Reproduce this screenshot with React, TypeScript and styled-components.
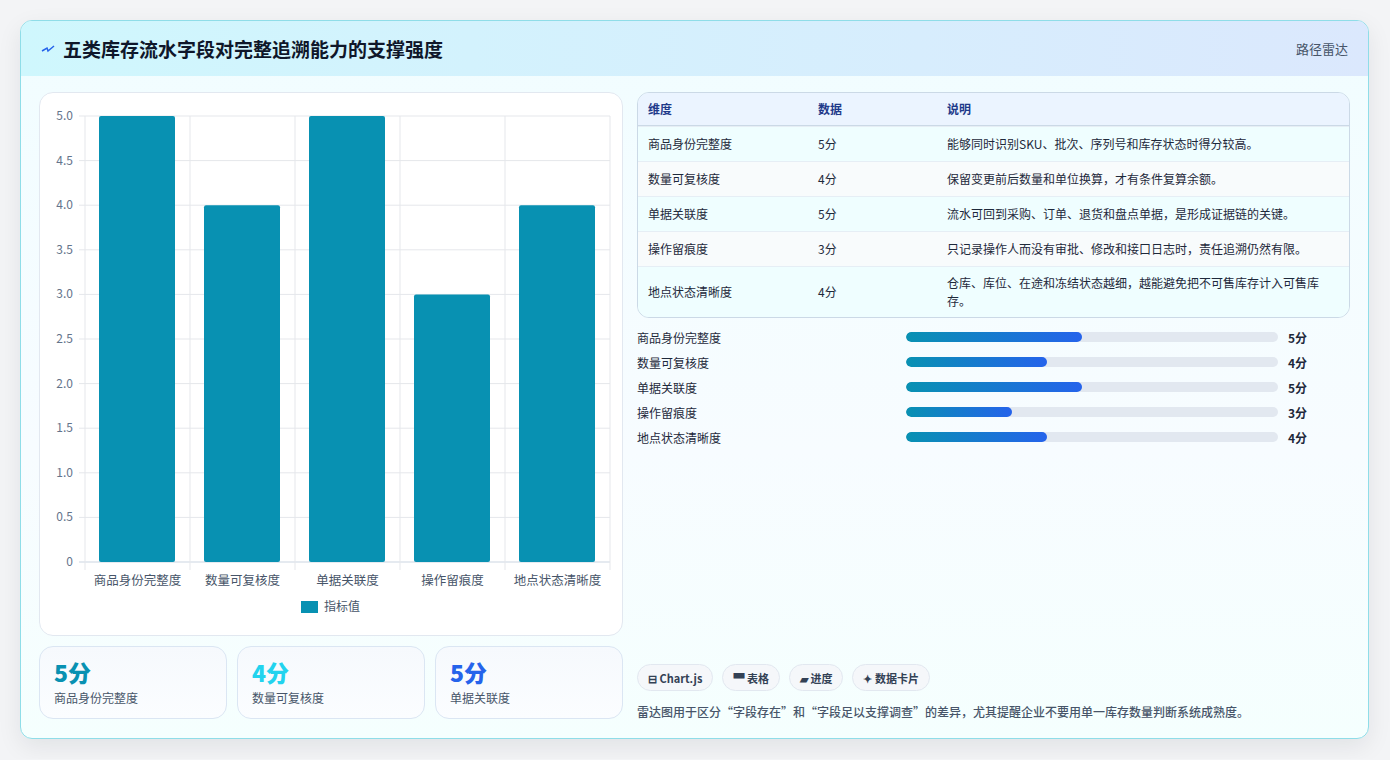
import React from "react";
import styled, { createGlobalStyle } from "styled-components";

const G = createGlobalStyle`
  html,body{margin:0;padding:0;background:#f3f4f6;}
  body{font-family:"Noto Sans CJK SC","Noto Sans",sans-serif;color:#0f172a;}
`;
const Page = styled.div`padding:20px 21px 20px 20px;`;
const Card = styled.div`
  border:1px solid #8fdde8;border-radius:12px;overflow:hidden;height:717px;
  display:flex;flex-direction:column;
  background:linear-gradient(180deg,#f1fdff,#f7fcff 60%,#f5fffe);
  box-shadow:0 8px 24px rgba(15,23,42,0.08);
`;
const Header = styled.div`
  height:55px;display:flex;align-items:center;justify-content:space-between;
  padding:0 20px;background:linear-gradient(90deg,#cff7fd,#dbe8fd);
`;
const Title = styled.h1`margin:0;font-size:19px;font-weight:700;display:flex;align-items:center;gap:8px;color:#0f172a;`;
const Tag = styled.span`font-size:13px;color:#475569;`;
const Body = styled.div`flex:1;display:grid;grid-template-columns:584px 1fr;gap:14px;padding:16px 18px 18px 18px;`;
const Col = styled.div`display:flex;flex-direction:column;gap:10px;min-height:0;`;
const ChartBox = styled.div`height:544px;box-sizing:border-box;background:#fff;border:1px solid #e2e8f0;border-radius:14px;`;
const Stats = styled.div`display:grid;grid-template-columns:repeat(3,1fr);gap:10px;`;
const Stat = styled.div`height:73px;box-sizing:border-box;border:1px solid #dbe6f3;border-radius:14px;background:linear-gradient(180deg,#f6f9fd,#fbfdff);padding:10px 14px;`;
const Big = styled.div<{c:string}>`font-size:23px;font-weight:800;color:${p=>p.c};line-height:30px;`;
const Small = styled.div`font-size:12px;color:#475569;margin-top:2px;`;
const Table = styled.div`border:1px solid #cbd9e6;border-radius:12px;overflow:hidden;background:#f0fdff;`;
const Row = styled.div<{h?:boolean;alt?:boolean}>`
  display:grid;grid-template-columns:170px 129px 1fr;padding:0 30px 0 10px;align-items:center;
  min-height:${p=>p.h?32:34}px;font-size:12px;
  ${p=>p.h?"background:#ebf4ff;color:#1e3a8a;font-weight:600;border-bottom:1px solid #cbd9e6;":""}
  ${p=>!p.h?"border-top:1px solid #e6eef5;":""}
  background:${p=>p.h?"#ebf4ff":p.alt?"#f8fbfc":"#effeff"};
  color:${p=>p.h?"#1e3a8a":"#1e293b"};
`;
const Cell = styled.div`padding:7px 0;line-height:18px;`;
const Bars = styled.div`display:flex;flex-direction:column;gap:7px;margin-top:10px;`;
const BarRow = styled.div`display:grid;grid-template-columns:269px 372px 1fr;align-items:center;font-size:12px;height:18px;color:#1e293b;`;
const Track = styled.div`height:10px;border-radius:5px;background:#e2e8f0;overflow:hidden;`;
const Fill = styled.div`height:100%;border-radius:5px;background:linear-gradient(90deg,#0891b2,#2563eb);`;
const Val = styled.span`padding-left:10px;font-weight:700;`;
const Spacer = styled.div`flex:1;`;
const Chips = styled.div`display:flex;gap:9px;`;
const Chip = styled.span`height:27px;box-sizing:border-box;padding:0 10px;border:1px solid #e2e8f0;border-radius:14px;background:#f5f7fa;font-size:11px;font-weight:700;color:#334155;display:flex;align-items:center;gap:3px;`;
const Note = styled.div`font-size:12px;color:#475569;font-weight:500;margin-top:3px;`;

const data = [["商品身份完整度",5,"能够同时识别SKU、批次、序列号和库存状态时得分较高。"],["数量可复核度",4,"保留变更前后数量和单位换算，才有条件复算余额。"],["单据关联度",5,"流水可回到采购、订单、退货和盘点单据，是形成证据链的关键。"],["操作留痕度",3,"只记录操作人而没有审批、修改和接口日志时，责任追溯仍然有限。"],["地点状态清晰度",4,"仓库、库位、在途和冻结状态越细，越能避免把不可售库存计入可售库存。"]] as [string,number,string][];

function Chart(){
  const x0=45,x1=570,y0=469,yT=23,w=(x1-x0)/5;
  const ticks=["0","0.5","1.0","1.5","2.0","2.5","3.0","3.5","4.0","4.5","5.0"];
  return <svg width="582" height="542" style={{display:"block"}} fontFamily="Noto Sans CJK SC, sans-serif">
    {ticks.map((t,i)=>{const y=y0-(y0-yT)*i/10;return <g key={t}><line x1={x0-6} x2={x1} y1={y} y2={y} stroke={i===0?"#cbd5e1":"#e5e7eb"}/><text x={x0-12} y={y+4} fontSize="12" fill="#64748b" textAnchor="end">{t}</text></g>})}
    {[0,1,2,3,4,5].map(i=><line key={i} x1={x0+i*w} x2={x0+i*w} y1={yT} y2={y0+8} stroke="#e5e7eb"/>)}
    {data.map(([n,v],i)=>{const h=(y0-yT)*v/5;return <g key={n}><rect x={x0+i*w+14} y={y0-h} width={w-29} height={h} rx="2" fill="#0891b2"/><text x={x0+i*w+w/2} y={y0+23} fontSize="12.5" fill="#475569" textAnchor="middle">{n}</text></g>})}
    <rect x="261" y="508" width="17" height="12" fill="#0891b2"/>
    <text x="284" y="518" fontSize="12" fill="#475569">指标值</text>
  </svg>;
}

export default function App(){
  return <Page><G/><Card>
    <Header><Title><svg width="14" height="10" viewBox="0 0 14 10"><path d="M1 7 L6 4 L7 7 L13 2" stroke="#2563eb" strokeWidth="1.5" fill="none"/></svg>五类库存流水字段对完整追溯能力的支撑强度</Title><Tag>路径雷达</Tag></Header>
    <Body>
      <Col>
        <ChartBox><Chart/></ChartBox>
        <Stats>
          <Stat><Big c="#0891b2">5分</Big><Small>商品身份完整度</Small></Stat>
          <Stat><Big c="#22d3ee">4分</Big><Small>数量可复核度</Small></Stat>
          <Stat><Big c="#2563eb">5分</Big><Small>单据关联度</Small></Stat>
        </Stats>
      </Col>
      <Col style={{gap:0}}>
        <Table>
          <Row h><Cell>维度</Cell><Cell>数据</Cell><Cell>说明</Cell></Row>
          {data.map(([n,v,d],i)=><Row key={n} alt={i%2===1}><Cell>{n}</Cell><Cell>{v}分</Cell><Cell>{d}</Cell></Row>)}
        </Table>
        <Bars>
          {data.map(([n,v])=><BarRow key={n}><span>{n}</span><Track><Fill style={{width:`${v*9.46}%`}}/></Track><Val>{v}分</Val></BarRow>)}
        </Bars>
        <Spacer/>
        <Chips><Chip>⊟ Chart.js</Chip><Chip>▀ 表格</Chip><Chip>▰ 进度</Chip><Chip>✦ 数据卡片</Chip></Chips>
        <Note style={{marginTop:12}}>雷达图用于区分“字段存在”和“字段足以支撑调查”的差异，尤其提醒企业不要用单一库存数量判断系统成熟度。</Note>
      </Col>
    </Body>
  </Card></Page>;
}
